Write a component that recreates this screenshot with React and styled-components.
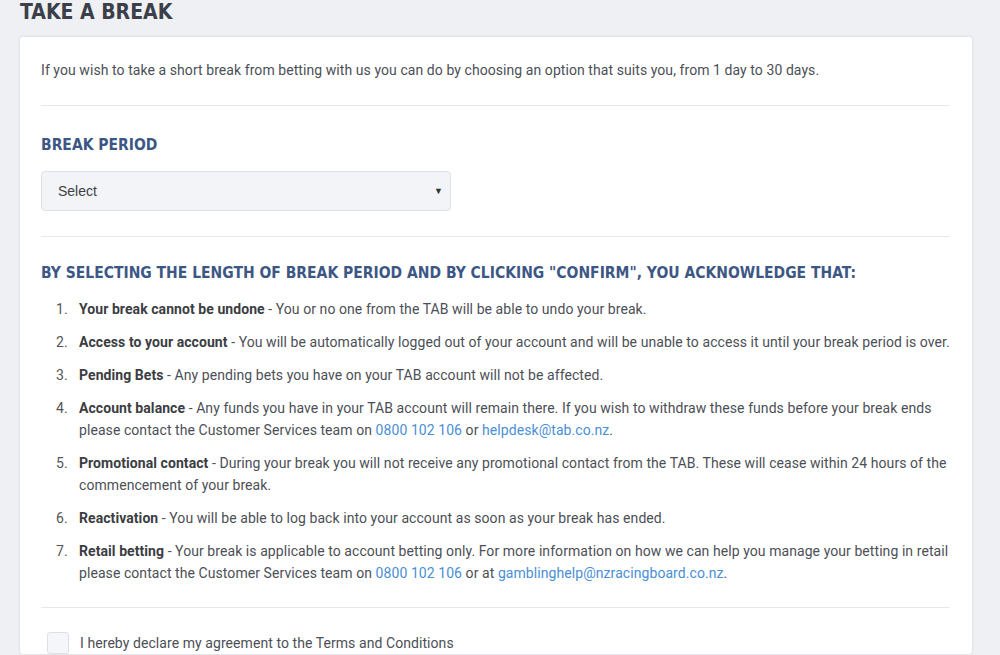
import React from "react";
import styled, { createGlobalStyle } from "styled-components";

const Global = createGlobalStyle`
  html, body { margin: 0; padding: 0; background: #eef0f3; }
  body { font-family: Roboto, "Open Sans", Arial, sans-serif; color: #4c4f56; }
  * { box-sizing: border-box; }
`;

const Page = styled.div`
  padding: 0 28px 0 20px;
  height: 655px;
  overflow: hidden;
`;

const Title = styled.h1`
  margin: 0;
  font-family: "DejaVu Sans Condensed", "DejaVu Sans", sans-serif;
  font-weight: 700;
  font-size: 21px;
  line-height: 24px;
  color: #3b3f4a;
  height: 37px;
`;

const Card = styled.div`
  background: #fff;
  border-radius: 3px;
  box-shadow: 0 0 3px rgba(0, 0, 0, 0.12);
  padding: 0 22px 0 21px;
`;

const Intro = styled.p`
  margin: 0;
  padding: 23px 0 25px;
  font-size: 14px;
  line-height: 20px;
  letter-spacing: 0.07px;
  border-bottom: 1px solid #e6e8ec;
`;

const Section = styled.div`
  padding: ${(p) => p.$pad || "0"};
  border-bottom: ${(p) => (p.$divider ? "1px solid #e6e8ec" : "none")};
`;

const SectionHeading = styled.h2`
  margin: 0;
  font-family: "DejaVu Sans Condensed", "DejaVu Sans", sans-serif;
  font-weight: 600;
  font-size: 15.5px;
  line-height: 22px;
  letter-spacing: 0;
  color: #3d5785;
  white-space: nowrap;
`;

const SelectBox = styled.div`
  margin-top: 15px;
  width: 410px;
  height: 40px;
  background: #f3f4f8;
  border: 1px solid #dde0e8;
  border-radius: 4px;
  display: flex;
  align-items: center;
  justify-content: space-between;
  padding: 0 7px 0 16px;
  font-family: "Liberation Sans", Arial, sans-serif;
  font-size: 14px;
  color: #3e3f44;
`;

const Caret = styled.span`
  font-size: 9px;
  color: #333;
`;

const List = styled.ol`
  margin: 14px 0 0;
  padding: 0 0 0 15px;
  list-style: none;
  counter-reset: item;
  display: flex;
  flex-direction: column;
  gap: 11px;
`;

const Item = styled.li`
  counter-increment: item;
  display: flex;
  font-size: 14px;
  line-height: 22px;
  letter-spacing: 0.07px;
  &::before {
    content: counter(item) ".";
    flex: 0 0 23px;
    color: #555;
  }
  b { font-weight: 700; color: #3b3d42; }
`;

const Text = styled.span`
  flex: 1;
`;

const Link = styled.a`
  color: #4a8fd6;
  text-decoration: none;
`;

const CheckRow = styled.label`
  display: flex;
  align-items: center;
  gap: 11px;
  padding: 24px 0 0 6px;
  font-size: 14px;
  letter-spacing: 0.07px;
  color: #4c4f56;
`;

const Box = styled.span`
  width: 22px;
  height: 22px;
  border: 1px solid #dde0e8;
  background: #f5f6f9;
  border-radius: 3px;
`;

const items = [
  [<b key="b">Your break cannot be undone</b>, " - You or no one from the TAB will be able to undo your break."],
  [<b key="b">Access to your account</b>, " - You will be automatically logged out of your account and will be unable to access it until your break period is over."],
  [<b key="b">Pending Bets</b>, " - Any pending bets you have on your TAB account will not be affected."],
  [<b key="b">Account balance</b>, " - Any funds you have in your TAB account will remain there. If you wish to withdraw these funds before your break ends please contact the Customer Services team on ", <Link key="l1">0800 102 106</Link>, " or ", <Link key="l2">helpdesk@tab.co.nz</Link>, "."],
  [<b key="b">Promotional contact</b>, " - During your break you will not receive any promotional contact from the TAB. These will cease within 24 hours of the commencement of your break."],
  [<b key="b">Reactivation</b>, " - You will be able to log back into your account as soon as your break has ended."],
  [<b key="b">Retail betting</b>, " - Your break is applicable to account betting only. For more information on how we can help you manage your betting in retail please contact the Customer Services team on ", <Link key="l1">0800 102 106</Link>, " or at ", <Link key="l2">gamblinghelp@nzracingboard.co.nz</Link>, "."],
];

export default function App() {
  return (
    <>
      <Global />
      <Page>
        <Title>TAKE A BREAK</Title>
        <Card>
          <Intro>
            If you wish to take a short break from betting with us you can do by choosing an option that suits you, from 1 day to 30 days.
          </Intro>
          <Section $pad="28px 0 25px" $divider>
            <SectionHeading>BREAK PERIOD</SectionHeading>
            <SelectBox>
              <span>Select</span>
              <Caret>▼</Caret>
            </SelectBox>
          </Section>
          <Section $pad="25px 0 23px" $divider>
            <SectionHeading>BY SELECTING THE LENGTH OF BREAK PERIOD AND BY CLICKING "CONFIRM", YOU ACKNOWLEDGE THAT:</SectionHeading>
            <List>
              {items.map((parts, i) => (
                <Item key={i}>
                  <Text>{parts}</Text>
                </Item>
              ))}
            </List>
          </Section>
          <CheckRow>
            <Box />
            I hereby declare my agreement to the Terms and Conditions
          </CheckRow>
        </Card>
      </Page>
    </>
  );
}
